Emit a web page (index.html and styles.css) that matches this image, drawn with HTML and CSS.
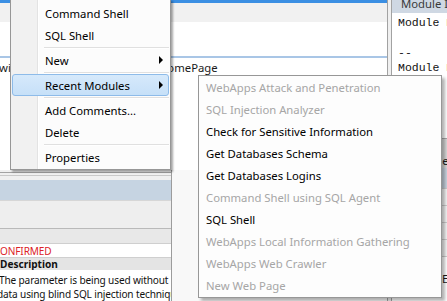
FILE: index.html
```html
<!DOCTYPE html>
<html>
<head>
<meta charset="utf-8">
<link rel="stylesheet" href="styles.css">
</head>
<body>
<div class="app">
  <div class="main">
    <div class="top-list">
      <div class="sel-row"></div>
      <div class="gray-row"></div>
      <div class="blank"></div>
      <div class="hdr-line"></div>
      <div class="url-row"><span class="url-a">with web access to the</span><span class="url-b">HomePage</span></div>
      <div class="list-rest"></div>
    </div>
    <div class="bottom">
      <div class="detail">
        <div class="d-s1"></div>
        <div class="d-s2"></div>
        <div class="d-s3"></div>
        <div class="d-head"></div>
        <div class="d-body"></div>
        <div class="d-row"></div>
        <div class="d-status"><span class="status">CONFIRMED</span></div>
        <div class="d-title">Description</div>
        <div class="d-text">
          <div class="t1">The parameter is being used without</div>
          <div class="t2">data using blind SQL injection technique</div>
        </div>
      </div>
      <div class="bottom-fill"></div>
    </div>
  </div>
  <div class="splitter"></div>
  <div class="props">
    <div class="props-head">Module Information</div>
    <pre class="props-text">Module Name
 
--
Module Path</pre>
    <div class="pt-head">Method</div>
    <div class="pt-band"></div>
    <div class="pt-row"></div>
    <div class="pt-row"></div>
    <div class="pt-row"></div>
    <div class="pt-row"></div>
    <div class="pt-row last">Edit</div>
  </div>
</div>

<div class="menu">
  <div class="item">Command Shell</div>
  <div class="item">SQL Shell</div>
  <div class="sep"></div>
  <div class="item">New<span class="arrow"></span></div>
  <div class="sep"></div>
  <div class="item hl">Recent Modules<span class="arrow"></span></div>
  <div class="sep"></div>
  <div class="item">Add Comments...</div>
  <div class="item">Delete</div>
  <div class="sep"></div>
  <div class="item">Properties</div>
</div>

<div class="submenu">
  <div class="sitem off">WebApps Attack and Penetration</div>
  <div class="sitem off">SQL Injection Analyzer</div>
  <div class="sitem">Check for Sensitive Information</div>
  <div class="sitem">Get Databases Schema</div>
  <div class="sitem">Get Databases Logins</div>
  <div class="sitem off">Command Shell using SQL Agent</div>
  <div class="sitem">SQL Shell</div>
  <div class="sitem off">WebApps Local Information Gathering</div>
  <div class="sitem off">WebApps Web Crawler</div>
  <div class="sitem off">New Web Page</div>
</div>
</body>
</html>
```

FILE: styles.css
```css
html, body {
  margin: 0;
  padding: 0;
}
body {
  width: 447px;
  height: 301px;
  overflow: hidden;
  position: relative;
  background: #fff;
  font-family: "Noto Sans", "Open Sans", sans-serif;
  font-size: 11.3px;
  color: #1a1a1a;
}
.app {
  display: flex;
  height: 301px;
}
.main {
  width: 387px;
  display: flex;
  flex-direction: column;
}
.top-list {
  height: 170px;
  display: flex;
  flex-direction: column;
  background: #fff;
}
.sel-row { height: 3px; background: #3b8fe3; }
.gray-row { height: 19px; background: #f1f1f1; }
.blank { height: 34px; background: #fff; }
.hdr-line { height: 2px; background: #a9c6e6; }
.url-row {
  height: 19px;
  display: flex;
  align-items: center;
  white-space: nowrap;
  overflow: hidden;
}
.url-a {
  width: 160px;
  flex: none;
  overflow: hidden;
  margin-left: -1px;
}
.url-b { flex: none; }
.list-rest { flex: 1; background: #fff; }

.bottom {
  flex: 1;
  display: flex;
}
.detail {
  width: 171px;
  border-right: 1px solid #9c9c9c;
  display: flex;
  flex-direction: column;
  font-size: 10.1px;
  letter-spacing: -0.15px;
  white-space: nowrap;
  overflow: hidden;
}
.d-s1 { height: 2px; background: #f0f0f0; }
.d-s2 { height: 2px; border-top: 1px solid #a3a3a3; background: #f0f0f0; }
.d-s3 { height: 4px; border-top: 1px solid #c9c9c9; background: #f0f0f0; }
.d-head { height: 20px; background: #c6d4e2; }
.d-body { height: 27px; border-top: 1px solid #d6d6d6; background: #eeeeee; }
.d-row { height: 14px; border-top: 1px solid #b9b9b9; background: #e8e8e8; }
.d-status {
  height: 13px;
  border-top: 1px solid #cfcfcf;
  background: #fff;
  display: flex;
  align-items: center;
}
.status {
  color: #dc2328;
  margin-left: -6px;
}
.d-title {
  height: 12px;
  border-top: 1px solid #cfcfcf;
  background: #e4e4e4;
  font-weight: bold;
  line-height: 12px;
  color: #111;
  letter-spacing: 0;
}
.d-text {
  flex: 1;
  background: #fff;
  padding-top: 3px;
  line-height: 14px;
  color: #111;
}
.t1 { margin-left: -1px; }
.t2 { margin-left: -3px; }
.bottom-fill {
  flex: 1;
  background: #f8f8f8;
}

.splitter {
  width: 3px;
  border-left: 1px solid #a2a2a2;
  border-right: 1px solid #a2a2a2;
  background: #f0f0f0;
}
.props {
  flex: 1;
  display: flex;
  flex-direction: column;
  background: #fff;
  overflow: hidden;
  white-space: nowrap;
}
.props-head {
  height: 13px;
  line-height: 8px;
  background: #cfd8e3;
  color: #3a3a3a;
  padding-left: 9px;
  overflow: hidden;
}
.props-text {
  margin: 0;
  height: 123px;
  padding: 2px 0 0 6px;
  font-family: "Liberation Mono", "Courier New", monospace;
  font-size: 11.5px;
  line-height: 15px;
  color: #111;
  overflow: hidden;
}
.pt-head {
  height: 29px;
  border-top: 1px solid #a8a8a8;
  background: #d8d8d8;
  line-height: 44px;
  padding-left: 40px;
}
.pt-band { height: 20px; background: #c9d3df; }
.pt-row {
  height: 16px;
  border-top: 1px solid #cdcdcd;
  background: #f4f4f4;
}
.pt-row.last {
  height: 30px;
  background: #fff;
  padding-left: 50px;
  line-height: 44px;
}

/* context menu */
.menu {
  position: absolute;
  left: 10px;
  top: -1px;
  width: 157px;
  padding: 2px 1px 1px;
  border: 1px solid #979797;
  background: linear-gradient(to right, #f1f1f1 0 26px, #e3e3e3 26px 27px, #ffffff 27px 28px, #fcfcfc 28px);
  box-shadow: 2px 2px 2px rgba(0, 0, 0, 0.35);
  z-index: 2;
}
.item {
  box-sizing: border-box;
  height: 22px;
  display: flex;
  align-items: center;
  padding: 0 5px 0 32px;
  border: 1px solid transparent;
  border-radius: 3px;
  color: #000;
  white-space: nowrap;
}
.item.hl {
  background: linear-gradient(#d6e9fb, #c6e0f8);
  border-color: #8dbbe9;
}
.arrow {
  width: 0;
  height: 0;
  margin-left: auto;
  border-left: 4px solid #000;
  border-top: 4px solid transparent;
  border-bottom: 4px solid transparent;
}
.sep {
  height: 3px;
  margin-left: 32px;
  background: linear-gradient(transparent 0 1px, #e0e0e0 1px 2px, #ffffff 2px 3px);
}

.submenu {
  position: absolute;
  left: 198px;
  top: 75px;
  width: 242px;
  padding-top: 1px;
  border: 1px solid #979797;
  background: #fdfdfd;
  box-shadow: 3px 3px 3px rgba(0, 0, 0, 0.3);
  z-index: 3;
}
.sitem {
  height: 22px;
  line-height: 21px;
  padding-left: 7px;
  color: #000;
  white-space: nowrap;
}
.sitem.off {
  color: #a6a6a6;
}
```
